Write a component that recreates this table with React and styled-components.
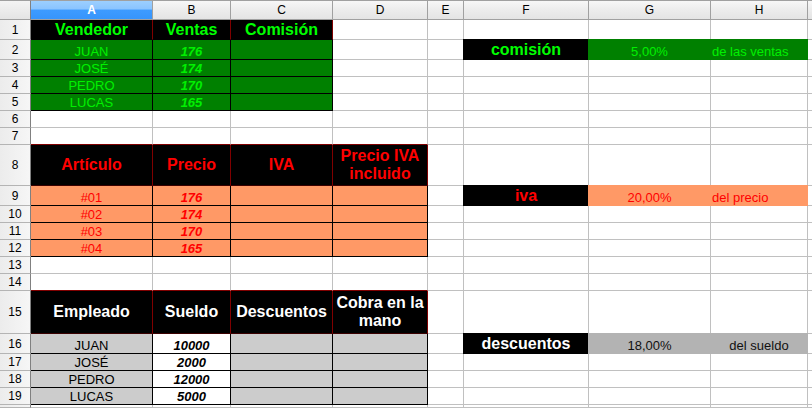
import React from 'react'
import styled, { createGlobalStyle } from 'styled-components'

const GlobalStyle = createGlobalStyle`
  html, body {
    margin: 0;
    padding: 0;
    background: #fff;
    overflow: hidden;
  }
  body {
    font-family: "Liberation Sans", Arial, sans-serif;
  }
`

const COLS = [122, 78, 102, 95, 36, 125, 122, 97]
const LETTERS = ['A', 'B', 'C', 'D', 'E', 'F', 'G', 'H', 'I']
const HEIGHTS = [20, 20, 17, 17, 17, 17, 17, 41, 20, 17, 17, 17, 17, 17, 43, 20, 17, 17, 17]
const GRID = '#c0c0c0'

const Sheet = styled.div`
  display: grid;
  grid-template-columns: 31px ${COLS.map(w => w + 'px').join(' ')} 1fr;
  grid-template-rows: 20px ${HEIGHTS.map(h => h + 'px').join(' ')} 1fr;
  width: 812px;
  height: 408px;
  overflow: hidden;
`

const Corner = styled.div`
  box-sizing: border-box;
  background: linear-gradient(#f4f4f4, #e4e4e4);
  border-top: 1px solid #a0a0a0;
  border-right: 1px solid #808080;
  border-bottom: 1px solid #a0a0a0;
`

const ColHead = styled.div`
  box-sizing: border-box;
  display: flex;
  align-items: center;
  justify-content: center;
  overflow: hidden;
  font-size: 12px;
  border-top: 1px solid #a0a0a0;
  border-right: 1px solid #a0a0a0;
  border-bottom: 1px solid #a0a0a0;
  background: ${p => p.$selected
    ? 'linear-gradient(#9ccfff, #8ac4ff 45%, #3d9bff 50%, #3795fb)'
    : 'linear-gradient(#f7f7f7, #ececec 50%, #e4e4e4)'};
  color: ${p => (p.$selected ? '#fff' : '#000')};
  font-weight: ${p => (p.$selected ? 700 : 400)};
`

const RowHead = styled.div`
  box-sizing: border-box;
  display: flex;
  align-items: center;
  justify-content: center;
  overflow: hidden;
  font-size: 12px;
  color: #000;
  background: linear-gradient(to right, #ececec, #f6f6f6);
  border-right: 1px solid #808080;
  border-bottom: 1px solid #b4b4b4;
`

const Cell = styled.div`
  box-sizing: border-box;
  display: flex;
  align-items: ${p => (p.$middle ? 'center' : 'flex-end')};
  justify-content: ${p => (p.$left ? 'flex-start' : 'center')};
  padding: 0 ${p => (p.$left ? '0 0 1px' : '2px')};
  text-align: center;
  white-space: ${p => (p.$wrap ? 'normal' : 'nowrap')};
  overflow: hidden;
  background: ${p => p.$bg || '#fff'};
  color: ${p => p.$fg || '#000'};
  font-size: ${p => p.$size || 13}px;
  line-height: ${p => (p.$size || 13) + 2}px;
  font-weight: ${p => (p.$bold ? 700 : 400)};
  font-style: ${p => (p.$italic ? 'italic' : 'normal')};
  border-right: 1px solid ${p => p.$br || (p.$fill ? p.$bg : GRID)};
  border-bottom: 1px solid ${p => p.$bb || (p.$fill ? p.$bg : GRID)};
  ${p => p.$fill && `box-shadow: 0 -1px 0 ${p.$bg}, -1px 0 0 ${p.$bg}, -1px -1px 0 ${p.$bg};`}
`

// table headers
const head = { $bg: '#000', $bold: true, $size: 16, $br: '#800000', $bb: '#3a0000' }
const gH = { ...head, $fg: '#00ff00', $bb: '#000' }
const rH = { ...head, $fg: '#ff0000', $middle: true }
const wH = { ...head, $fg: '#fff', $middle: true }
const edge = { $bb: '#800000' }

// table bodies
const boxed = { $br: '#000', $bb: '#000' }
const g = { ...boxed, $bg: '#008000', $fg: '#00f000' }
const gN = { ...g, $bold: true, $italic: true }
const o = { ...boxed, $bg: '#ff9966', $fg: '#ff0000' }
const oN = { ...o, $bold: true, $italic: true }
const gr = { ...boxed, $bg: '#cccccc', $fg: '#000' }
const wN = { ...boxed, $bg: '#fff', $fg: '#000', $bold: true, $italic: true }

// side parameters
const label = { $bg: '#000', $bold: true, $size: 16, $fill: true }
const lblG = { ...label, $fg: '#00ff00' }
const lblR = { ...label, $fg: '#ff0000' }
const lblW = { ...label, $fg: '#fff' }
const valG = { $bg: '#008000', $fg: '#00f000', $fill: true }
const valR = { $bg: '#ff9966', $fg: '#ff0000', $fill: true }
const valGr = { $bg: '#b3b3b3', $fg: '#111', $fill: true }

const E = null
const c = (t, s) => ({ t, s })

const ROWS = [
  [c('Vendedor', gH), c('Ventas', gH), c('Comisión', gH)],
  [c('JUAN', g), c('176', gN), c('', g), E, E, c('comisión', lblG), c('5,00%', valG), c('de las ventas', { ...valG, $left: true })],
  [c('JOSÉ', g), c('174', gN), c('', g)],
  [c('PEDRO', g), c('170', gN), c('', g)],
  [c('LUCAS', g), c('165', gN), c('', g)],
  [],
  [c('', edge), c('', edge), c('', edge), c('', edge)],
  [c('Artículo', rH), c('Precio', rH), c('IVA', rH), c('Precio IVA incluido', { ...rH, $wrap: true })],
  [c('#01', o), c('176', oN), c('', o), c('', o), E, c('iva', lblR), c('20,00%', valR), c('del precio', { ...valR, $left: true })],
  [c('#02', o), c('174', oN), c('', o), c('', o)],
  [c('#03', o), c('170', oN), c('', o), c('', o)],
  [c('#04', o), c('165', oN), c('', o), c('', o)],
  [],
  [c('', edge), c('', edge), c('', edge), c('', edge)],
  [c('Empleado', wH), c('Sueldo', wH), c('Descuentos', wH), c('Cobra en la mano', { ...wH, $wrap: true })],
  [c('JUAN', gr), c('10000', wN), c('', gr), c('', gr), E, c('descuentos', lblW), c('18,00%', valGr), c('del sueldo', valGr)],
  [c('JOSÉ', gr), c('2000', wN), c('', gr), c('', gr)],
  [c('PEDRO', gr), c('12000', wN), c('', gr), c('', gr)],
  [c('LUCAS', gr), c('5000', wN), c('', gr), c('', gr)],
  [],
]

// the last row and column are only a sliver at the window's edge
const VISIBLE_ROWS = 19

export default function App() {
  return (
    <>
      <GlobalStyle />
      <Sheet>
        <Corner />
        {LETTERS.map(l => (
          <ColHead key={l} $selected={l === 'A'}>{l === 'I' ? '' : l}</ColHead>
        ))}
        {ROWS.map((row, r) => (
          <React.Fragment key={r}>
            <RowHead>{r < VISIBLE_ROWS ? r + 1 : ''}</RowHead>
            {LETTERS.map((l, i) => {
              const cell = row[i]
              return (
                <Cell key={l} {...(cell ? cell.s : {})}>
                  {cell ? cell.t : ''}
                </Cell>
              )
            })}
          </React.Fragment>
        ))}
      </Sheet>
    </>
  )
}
